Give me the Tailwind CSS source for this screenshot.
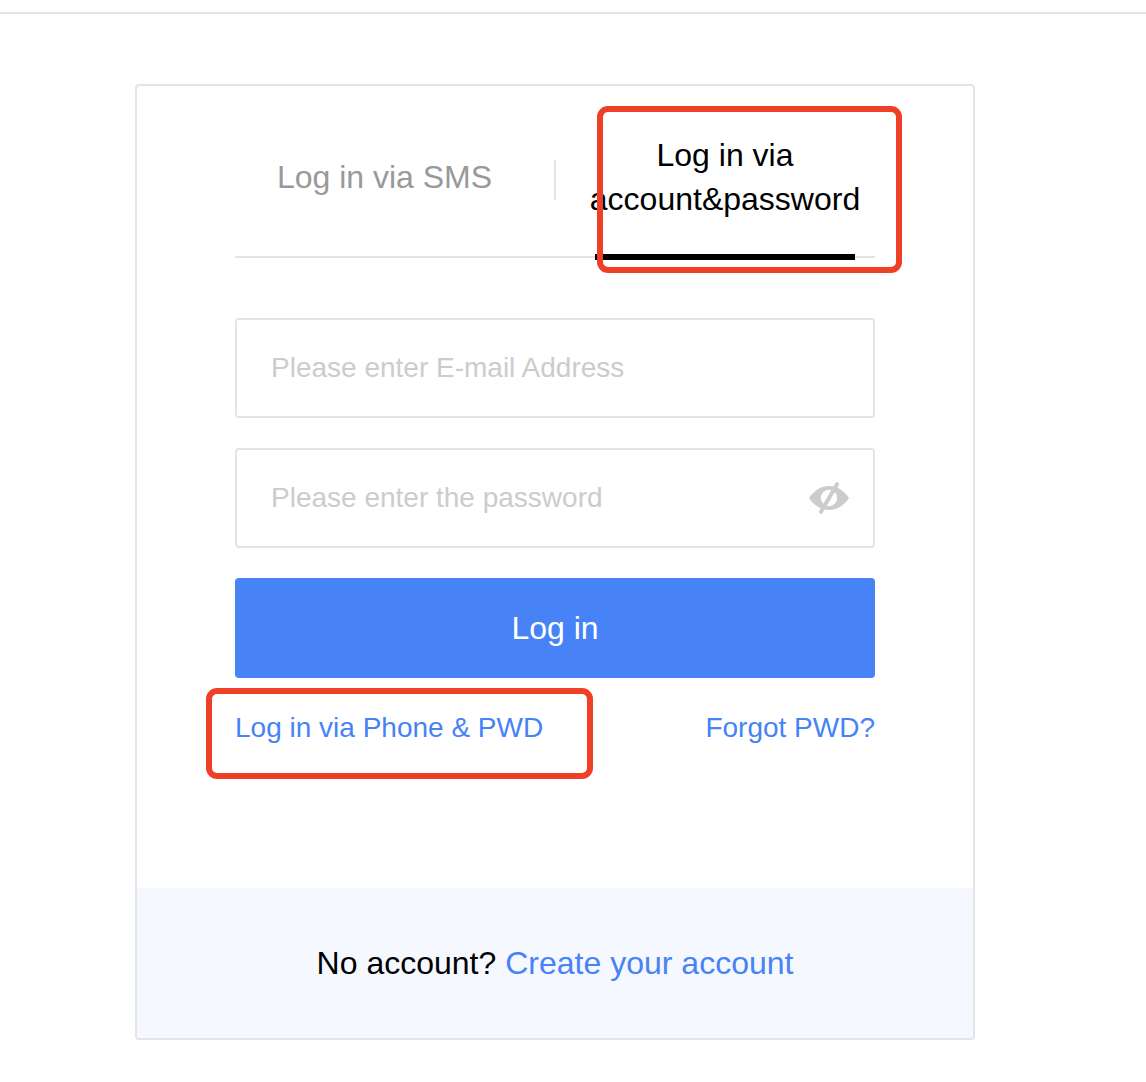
<!DOCTYPE html>
<html lang="en">
<head>
  <meta charset="UTF-8" />
  <meta name="viewport" content="width=device-width, initial-scale=1.0"/>
  <title>Log in</title>
  <script src="https://cdn.jsdelivr.net/npm/@tailwindcss/browser@4"></script>
</head>
<body class="bg-white font-['Liberation_Sans',Arial,sans-serif] text-black h-[1082px] overflow-hidden">

  <header class="h-3.5 border-b-2 border-[#e4e4e4]"></header>

  <main class="relative mt-[70px] ml-[135px] w-[840px] h-[956px] flex flex-col border-2 border-[#e4e4e4] rounded">

    <div class="flex-1 px-[98px]">
      <!-- Tabs -->
      <nav class="h-[172px] flex items-center justify-between px-5 pt-3 border-b-2 border-[#e4e4e4] text-[32px] leading-[44px] text-center">
        <button type="button" class="w-[260px] pr-px text-[#999]">Log in via SMS</button>
        <span class="w-0.5 h-10 mt-1.5 bg-[#e4e4e4]"></span>
        <button type="button" class="relative w-[260px] flex flex-col items-center">
          <span>Log in via</span>
          <span>account&amp;password</span>
          <span class="absolute left-0 top-[121px] w-full h-1.5 bg-black"></span>
        </button>
      </nav>

      <!-- Login form -->
      <form class="mt-[60px]">
        <input type="text" placeholder="Please enter E-mail Address" class="block w-full h-[100px] px-[34px] border-2 border-[#e4e4e4] rounded text-[28px] placeholder:text-[#ccc]" />

        <div class="mt-[30px] h-[100px] flex items-center pl-[34px] pr-6 border-2 border-[#e4e4e4] rounded">
          <input type="password" placeholder="Please enter the password" class="flex-1 text-[28px] placeholder:text-[#ccc]" />
          <svg class="w-10 h-8" viewBox="0 0 40 32" fill="none">
            <path fill="#ccc" fill-rule="evenodd" d="M0 16C5 8.500 12 4 20 4s15 4.500 20 12c-5 7.500-12 12-20 12S5 23.500 0 16ZM20 7.800a8.200 8.200 0 1 0 0 16.400a8.200 8.200 0 1 0 0-16.400Z"/>
            <path stroke="#ccc" stroke-width="4" stroke-linecap="round" d="M28 2.200L12 29.800"/>
          </svg>
        </div>

        <button type="submit" class="mt-[30px] w-full h-[100px] bg-[#4783f7] text-white text-[32px] rounded">Log in</button>
      </form>

      <div class="mt-[30px] flex justify-between text-[28px] leading-10 text-[#4783f7]">
        <a href="#">Log in via Phone &amp; PWD</a>
        <a href="#">Forgot PWD?</a>
      </div>
    </div>

    <footer class="h-[150px] flex items-center justify-center gap-[9px] bg-[#f5f8ff] text-[32px]">
      <span>No account?</span>
      <a href="#" class="text-[#4783f7]">Create your account</a>
    </footer>

    <!-- Highlight boxes -->
    <div class="absolute left-[460px] top-5 w-[305px] h-[167px] border-6 border-[#ee4026] rounded-[11px]"></div>
    <div class="absolute left-[69px] top-[602px] w-[387px] h-[91px] border-6 border-[#ee4026] rounded-[11px]"></div>
  </main>

</body>
</html>
